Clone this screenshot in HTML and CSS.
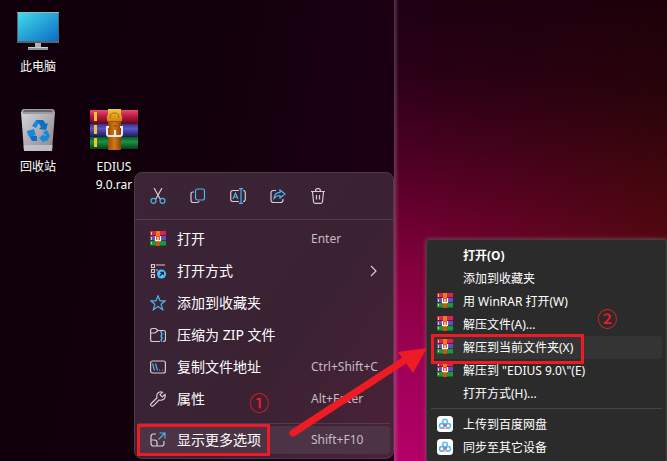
FILE: index.html
```html
<!DOCTYPE html>
<html lang="zh-CN">
<head>
<meta charset="utf-8">
<meta name="viewport" content="width=device-width, initial-scale=1">
<title>桌面</title>
<link rel="stylesheet" href="styles.css">
</head>
<body>
<svg class="defs" aria-hidden="true">
  <defs>
    <linearGradient id="screen" x1="0" y1="0" x2="1" y2="1"><stop offset="0" stop-color="#3fdbe8"/><stop offset="1" stop-color="#0b6cc4"/></linearGradient>
    <linearGradient id="bin" x1="0" y1="0" x2="1" y2="1"><stop offset="0" stop-color="#d4d4d8"/><stop offset=".6" stop-color="#a6a4aa"/><stop offset="1" stop-color="#85838a"/></linearGradient>
    <linearGradient id="red" x1="0" y1="0" x2="0" y2="1"><stop offset="0" stop-color="#e8506e"/><stop offset=".4" stop-color="#c01c44"/><stop offset="1" stop-color="#5c0820"/></linearGradient>
    <linearGradient id="blue" x1="0" y1="0" x2="0" y2="1"><stop offset="0" stop-color="#34308a"/><stop offset=".35" stop-color="#5a56cc"/><stop offset="1" stop-color="#1c184e"/></linearGradient>
    <linearGradient id="green" x1="0" y1="0" x2="0" y2="1"><stop offset="0" stop-color="#0a5a24"/><stop offset=".4" stop-color="#1c9242"/><stop offset="1" stop-color="#06401a"/></linearGradient>
    <linearGradient id="belt" x1="0" y1="0" x2="1" y2="0"><stop offset="0" stop-color="#9c4c08"/><stop offset=".5" stop-color="#d07818"/><stop offset="1" stop-color="#8c4208"/></linearGradient>
    <linearGradient id="buckle" x1="0" y1="0" x2="0" y2="1"><stop offset="0" stop-color="#f0cc40"/><stop offset="1" stop-color="#d88010"/></linearGradient>
  </defs>
  <symbol id="rar" viewBox="0 0 16 16">
    <path fill="#d92350" d="M0 0h16v5H0z"/><path fill="#5c4fc0" d="M0 5h16v5H0z"/><path fill="#189a3c" d="M0 10h16v5H0z"/>
    <path fill="#3a0b28" d="M0 4h16v1H0zM0 9h16v1H0z" opacity=".6"/><path fill="#06401a" d="M0 14h16v1H0z" opacity=".5"/>
    <path fill="#f5d33b" d="M1 1h1v3H1zM1 6h1v3H1zM1 11h1v2H1z"/>
    <path fill="#f07a1c" d="M6 0h4v15H6z"/><path fill="#c9560c" d="M6 11h4v4H6z"/>
    <path fill="#e0452c" d="M6 5h4v5H6z"/><path d="M5.500 5v4.500h5V5M8 6v3" fill="none" stroke="#fff" stroke-width="1.200"/>
  </symbol>
  <symbol id="cloud" viewBox="0 0 16 16">
    <rect width="16" height="16" rx="3.500" fill="#fff"/>
    <g fill="none" stroke-width="1.600"><circle cx="8" cy="5.600" r="2.400" stroke="#5cc4f5"/><circle cx="4.800" cy="9.800" r="2.300" stroke="#4db4f5"/><circle cx="11.200" cy="9.800" r="2.300" stroke="#5cb8f2"/><path d="M6.500 8.200 8 9.800l1.500-1.600" stroke="#f4506c"/><path d="M6 12.300h4" stroke="#f4a0b4" stroke-width="1"/></g>
  </symbol>
</svg>

<main class="desktop">
  <section class="pane pane-left">
    <div class="shortcuts">
      <button class="shortcut">
        <svg class="shortcut-icon" viewBox="0 0 48 48"><path fill="#aab2b8" d="M21 35h6v6h-6z"/><path fill="#8b959b" d="M14 40h20v3H14z"/><path fill="#c9d0d4" d="M14 40h20v1H14z"/><path fill="#59636e" d="M3 5h42v31H3z"/><path fill="#a4b0b8" d="M3 5h42v1H3z"/><path fill="url(#screen)" d="M4 6h40v28H4z"/></svg>
        <span class="shortcut-name">此电脑</span>
      </button>
      <button class="shortcut">
        <svg class="shortcut-icon" viewBox="0 0 48 48"><path fill="#77757c" d="m9 3 3-1h24l3 1v3H9z"/><path fill="url(#bin)" d="M7 5h34l-3 39H10z"/><path fill="#c8c9ce" d="M9.500 38h29L38 44H10z" opacity=".8"/><path fill="#9b9ba2" d="m7 4 2-2h30l2 2-2 3H9z"/><path fill="#66646c" d="m9 4 2-1h26l2 1-1 1H10z"/>
          <g fill="#1688dd"><path d="m18 19 4-6h5l-5 8z"/><path fill="#0c70c4" d="m23 13 6 0 3 4 2-1-2 7-7-1 2-2z"/><path d="m13 24 7-2 2 7-2-1-2 5-4-5z"/><path fill="#0c70c4" d="m16 30 3-1h4v5h-5z"/><path d="m29 25 4-2 3 6-3 5h-3v2l-5-5 5-4v2h2z"/></g></svg>
        <span class="shortcut-name">回收站</span>
      </button>
      <button class="shortcut">
        <svg class="shortcut-icon" viewBox="0 0 48 48"><path fill="url(#red)" d="M0 3h48v14H0z"/><path fill="url(#blue)" d="M0 17h48v13H0z"/><path fill="url(#green)" d="M0 30h48v12H0z"/><path fill="#f7c22c" d="M4 5h3v9H4zM4 18h3v9H4zM4 31h3v9H4z"/><path fill="url(#belt)" d="M18 2h13v41H18z"/><path fill="url(#buckle)" d="M18 2h13v5q2 3 1 7H17q-1-4 1-7z"/><path fill="#a0560a" d="M18 14h13v1H18zM24 18h2v2h-2z"/><path fill="none" stroke="#a8640e" d="M20 11q0-5 4.500-5t4.500 5"/><path fill="none" stroke="#e9e9ee" stroke-width="2" d="M19 20h-2v7q0 2 2 2h11q2 0 2-2v-7h-2M25 23v6"/></svg>
        <span class="shortcut-name">EDIUS 9.0.rar</span>
      </button>
    </div>

    <nav class="menu" aria-label="快捷菜单">
      <div class="tools">
        <button class="tool" aria-label="剪切"><svg viewBox="0 0 16 16"><path d="M4 0l6.200 11M12 0 5.800 11"/><g class="accent"><circle cx="3.500" cy="12.800" r="2.500"/><circle cx="12.500" cy="12.800" r="2.500"/></g></svg></button>
        <button class="tool" aria-label="复制"><svg viewBox="0 0 16 16"><path d="M4 4H3Q1 4 1 6v6q0 2.500 2 2.500h4q2 0 2-1.500"/><rect class="accent" x="5.500" y="1" width="9" height="11" rx="2"/></svg></button>
        <button class="tool" aria-label="重命名"><svg viewBox="0 0 16 16"><path d="M9 2.500H3Q.7 2.500.7 5v6q0 2.500 2.300 2.500h6M13 2.500q2.300 0 2.300 2.500v6q0 2.500-2.300 2.500"/><path class="accent" d="m3 11 2.500-6L8 11M4 9h3M11 1v14M9 .7h4M9 15.300h4"/></svg></button>
        <button class="tool" aria-label="共享"><svg viewBox="0 0 16 16"><path d="M6 2.500H3.500Q1 2.500 1 5v7q0 2.500 2.500 2.500h7q2.500 0 2.500-2.500v-1"/><path class="accent" d="M10 2v2.300q-5.500.2-6 6.200 2.200-3 6-3V10l5-4z"/></svg></button>
        <button class="tool" aria-label="删除"><svg viewBox="0 0 16 16"><path d="M1 3.500h14M5.500 3q0-2.500 2.500-2.500t2.500 2.500M2.500 4l1 9.500q.2 1.800 1.500 1.800h6q1.300 0 1.500-1.800l1-9.500M6.500 7v4.500M9.500 7v4.500"/></svg></button>
      </div>
      <ul class="list">
        <li><button class="item"><svg viewBox="0 0 16 16"><use href="#rar"/></svg><span class="label">打开</span><kbd>Enter</kbd></button></li>
        <li><button class="item"><svg viewBox="0 0 16 16"><path d="M1.500 1.500h3v3h-3zM1.500 6.500h3v3h-3zM1.500 11.500h3v3h-3zM6 2h9M6 7h2"/><circle cx="11.500" cy="11" r="4.500" fill="#4cc2ff" stroke="none"/><path class="ink" d="m9.700 12.800 3.300-3.300M10.300 9.300h3v3"/></svg><span class="label">打开方式</span><svg class="chevron" viewBox="0 0 16 16"><path d="m6 3 5 5-5 5"/></svg></button></li>
        <li><button class="item"><svg viewBox="0 0 16 16"><path class="accent" d="m8 .8 2 5h5.300l-4.200 3.500 1.600 5.400L8 11.500l-4.700 3.200 1.600-5.400L.7 5.800H6z"/></svg><span class="label">添加到收藏夹</span></button></li>
        <li><button class="item"><svg viewBox="0 0 16 16"><path d="M10 14.500H2.500Q.6 14.500.6 12.500V3.500q0-2 2-2h3L8 3.500h5.500q2 0 2 2v7q0 2-2 2H13M.6 6h4.500L8 3.500"/><path class="accent" d="M11.500 4v11M10 5h1M12 7h1.500M10 9h1M12 11h1.500M10 13h1"/></svg><span class="label">压缩为 ZIP 文件</span></button></li>
        <li><button class="item"><svg viewBox="0 0 16 16"><rect x=".6" y="2" width="14.800" height="12" rx="2"/><path class="accent" d="m2.500 4.500 2 7M5.500 4.500l2 7M9 11h1M12 11h1"/></svg><span class="label">复制文件地址</span><kbd>Ctrl+Shift+C</kbd></button></li>
        <li><button class="item"><svg viewBox="0 0 16 16"><path d="M12.500 1.200Q9.500.2 7.500 2.500 6.200 4.500 7 6.800L1 12.700q-.8 1 .1 2t2.200.1L9 9q3 .8 5-1 1.800-2 1-4.700L12.300 6 10 3.700z"/></svg><span class="label">属性</span><kbd>Alt+Enter</kbd></button></li>
      </ul>
      <div class="more">
        <button class="item current"><svg viewBox="0 0 16 16"><path d="M6 2H3.500Q1 2 1 4.500v7Q1 14 3.500 14h8q2.500 0 2.500-2.500V9M1 8h3.500Q7 8 7 10.500V14"/><path class="accent" d="m8.500 7.500 6-6M9.500 1h5.500v5.500"/></svg><span class="label">显示更多选项</span><kbd>Shift+F10</kbd></button>
      </div>
    </nav>
  </section>

  <section class="pane pane-right">
    <nav class="classic" aria-label="更多选项">
      <ul class="list">
        <li><button class="entry default">打开(O)</button></li>
        <li><button class="entry">添加到收藏夹</button></li>
        <li><button class="entry"><svg viewBox="0 0 16 16"><use href="#rar"/></svg>用 WinRAR 打开(W)</button></li>
        <li><button class="entry"><svg viewBox="0 0 16 16"><use href="#rar"/></svg>解压文件(A)...</button></li>
        <li><button class="entry current"><svg viewBox="0 0 16 16"><use href="#rar"/></svg>解压到当前文件夹(X)</button></li>
        <li><button class="entry"><svg viewBox="0 0 16 16"><use href="#rar"/></svg>解压到 "EDIUS 9.0\"(E)</button></li>
        <li><button class="entry">打开方式(H)...</button></li>
      </ul>
      <ul class="list divided">
        <li><button class="entry"><svg viewBox="0 0 16 16"><use href="#cloud"/></svg>上传到百度网盘</button></li>
        <li><button class="entry"><svg viewBox="0 0 16 16"><use href="#cloud"/></svg>同步至其它设备</button></li>
      </ul>
    </nav>
  </section>

  <span class="frame frame-one"></span>
  <span class="frame frame-two"></span>
  <span class="step step-one">①</span>
  <span class="step step-two">②</span>
  <svg class="arrow" viewBox="0 0 140 92" aria-hidden="true"><path d="M5 86 117 13" stroke="#ed1c24" stroke-width="7" stroke-linecap="round"/><path fill="#ed1c24" d="M139 1 110 5l15 21z"/></svg>
</main>
</body>
</html>
```
FILE: styles.css
```css
* { box-sizing: border-box; }

body {
  margin: 0;
  background: #12000c;
  color: #fff;
  font: 12px/18px "Noto Sans", "Noto Sans CJK SC", sans-serif;
}

button {
  border: 0;
  padding: 0;
  background: none;
  color: inherit;
  font: inherit;
  text-align: left;
}

svg { display: block; fill: none; }

.defs { position: absolute; width: 0; height: 0; }

.desktop {
  position: relative;
  display: grid;
  grid-template-columns: 394fr 273fr;
  min-height: 100vh;
  overflow: hidden;
}

.pane { position: relative; }

.pane-left { background: linear-gradient(100deg, #10000b 0%, #12000c 45%, #1e0014 100%); }

.pane-right {
  background:
    linear-gradient(90deg, rgba(190, 150, 170, 0.35), transparent 5px),
    linear-gradient(180deg, #1c0012 0%, #2a0016 16%, #4a0022 33%, #6c0030 48%, #86003e 60%, #a2005a 82%, #b40068 100%);
}

/* Warm side of the wallpaper, fading in towards the right edge */
.pane-right::before {
  content: "";
  position: absolute;
  inset: 0;
  background: linear-gradient(180deg, #1e000a 0%, #28040a 20%, #3c060c 35%, #520810 52%, #700818 100%);
  mask-image: linear-gradient(90deg, transparent 8%, #000 100%);
}

/* Desktop shortcuts */
.shortcuts {
  display: grid;
  grid-template-rows: repeat(2, 100px);
  grid-template-columns: repeat(2, 76px);
  grid-auto-flow: column;
}

.shortcut:first-child { grid-column: 1 / 2; }
.shortcut:last-child { grid-area: 2 / 2; }

.shortcut {
  display: flex;
  flex-direction: column;
  align-items: center;
  padding-top: 7px;
  text-align: center;
}

.shortcut-icon { width: 48px; height: 48px; margin-bottom: 3px; }

.shortcut-name { width: 44px; text-shadow: 0 1px 2px #000; }

/* Context menu */
.menu {
  position: absolute;
  top: 172px;
  right: 0;
  width: 260px;
  border: 1px solid #4d3a49;
  border-radius: 8px;
  background: linear-gradient(125deg, #3a2435 0%, #3a2233 60%, #4c2138 100%);
}

.menu svg {
  width: 16px;
  height: 16px;
  stroke: #d5ccd3;
  stroke-width: 1.2;
}

.menu .accent { stroke: #4cb4ec; }

.menu .ink { stroke: #10202c; }

.menu use { stroke: none; }

.tools {
  display: flex;
  gap: 24px;
  padding: 15px;
  border-bottom: 1px solid #503c4a;
}

.list { margin: 0; padding: 0; list-style: none; }

.menu .list { padding: 3px 0 8px; }

.item {
  display: grid;
  grid-template-columns: 16px 1fr 70px;
  column-gap: 11px;
  align-items: center;
  width: 100%;
  height: 32px;
  padding: 0 12px 0 15px;
  font-size: 14px;
}

kbd { font: 12px/16px "Noto Sans", sans-serif; color: #c6bdc4; }

.menu .chevron { justify-self: end; }

.more {
  margin: 0 3px;
  padding: 2px 0 4px;
  border-top: 1px solid #503c4a;
}

.more .item {
  height: 28px;
  padding: 0 9px 0 12px;
  border-radius: 4px;
  background: #4c3446;
}

/* Classic menu */
.classic {
  position: absolute;
  top: 239px;
  left: 32px;
  right: 0;
  padding: 4px 4px 2px;
  border: 1px solid #3f3f3f;
  border-radius: 3px;
  background: #2b2b2b;
  box-shadow: 0 0 4px rgba(160, 110, 130, 0.6);
}

.entry {
  position: relative;
  display: block;
  width: 100%;
  height: 23px;
  padding-left: 32px;
  border-radius: 4px;
}

.entry svg {
  position: absolute;
  top: 3px;
  left: 6px;
  width: 16px;
  height: 16px;
}

.default { font-weight: 700; }

.entry.current { background: #343434; }

.divided {
  margin-top: 3px;
  padding-top: 4px;
  border-top: 1px solid #454545;
}

/* Step marks */
.frame { position: absolute; border: 3px solid #ed1c24; }

.frame-one { top: 424px; left: 137px; width: 133px; height: 32px; }

.frame-two { top: 334px; left: 431px; width: 153px; height: 30px; }

.step {
  position: absolute;
  color: #ed1c24;
  font: 500 20px/24px "Noto Sans CJK SC", sans-serif;
}

.step-one { top: 391px; left: 249px; }

.step-two { top: 307px; left: 597px; }

.arrow { position: absolute; top: 347px; left: 288px; width: 140px; height: 92px; }
```
